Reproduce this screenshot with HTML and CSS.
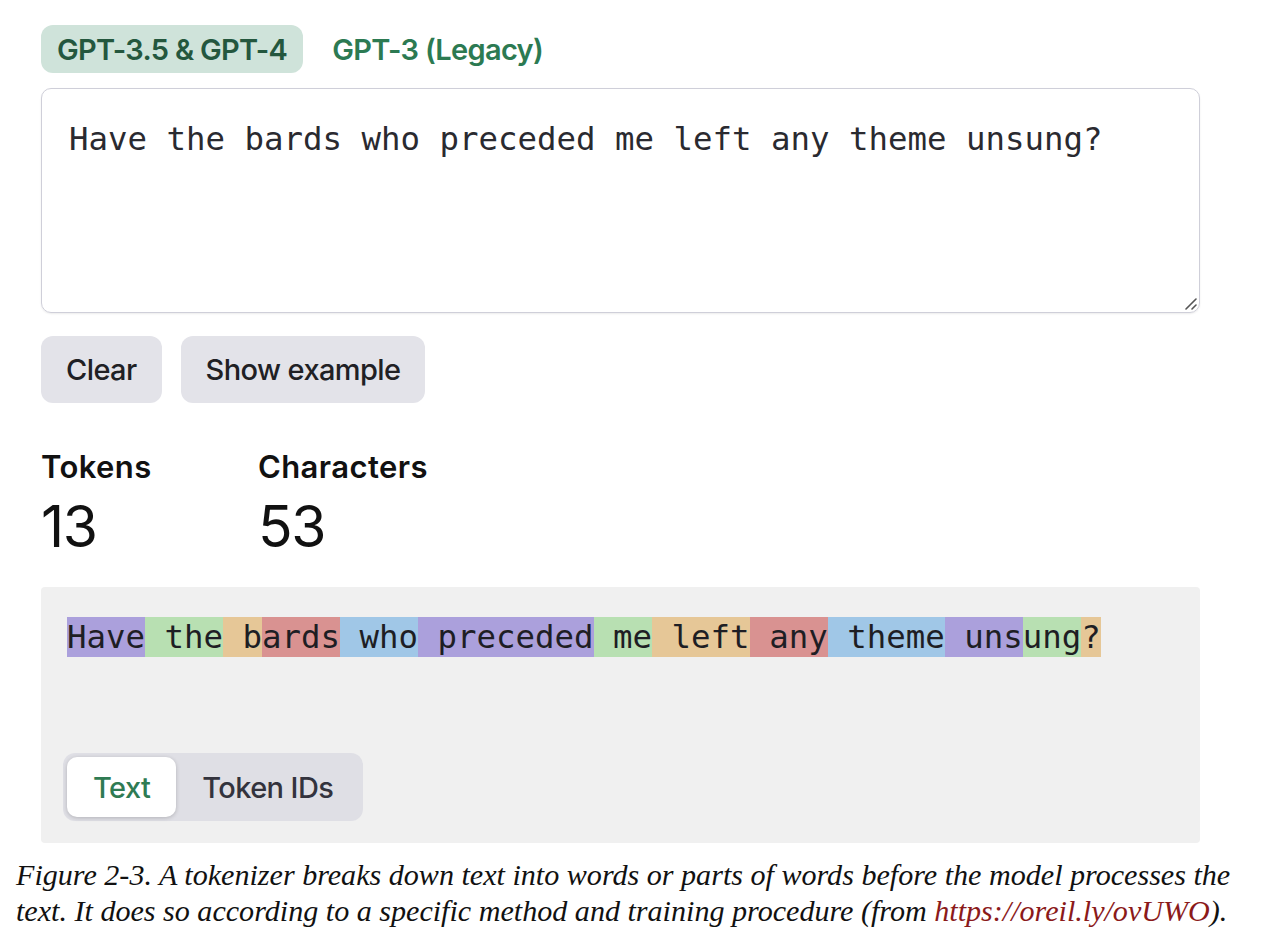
FILE: index.html
```html
<!DOCTYPE html>
<html>
<head>
<meta charset="utf-8">
<link rel="stylesheet" href="styles.css">
</head>
<body>
<div class="page">
  <div class="tabs">
    <span class="tab tab-active">GPT-3.5 &amp; GPT-4</span>
    <span class="tab">GPT-3 (Legacy)</span>
  </div>
  <div class="input-box">
    <div class="input-text">Have the bards who preceded me left any theme unsung?</div>
    <svg class="grip" width="14" height="14" viewBox="0 0 14 14"><path d="M3 13 L13 3 M9 13 L13 9" stroke="#555" stroke-width="1.6" stroke-linecap="round"/></svg>
  </div>
  <div class="actions">
    <button class="btn">Clear</button>
    <button class="btn">Show example</button>
  </div>
  <div class="stats">
    <div class="stat stat-tokens">
      <div class="stat-label">Tokens</div>
      <div class="stat-value">13</div>
    </div>
    <div class="stat">
      <div class="stat-label">Characters</div>
      <div class="stat-value">53</div>
    </div>
  </div>
  <div class="output">
    <div class="token-line"><span class="t t1">Have</span><span class="t t2"> the</span><span class="t t3"> b</span><span class="t t4">ards</span><span class="t t5"> who</span><span class="t t1"> preceded</span><span class="t t2"> me</span><span class="t t3"> left</span><span class="t t4"> any</span><span class="t t5"> theme</span><span class="t t1"> uns</span><span class="t t2">ung</span><span class="t t3">?</span></div>
    <div class="segmented">
      <span class="seg seg-active">Text</span>
      <span class="seg">Token IDs</span>
    </div>
  </div>
</div>
<p class="caption">Figure 2-3. A tokenizer breaks down text into words or parts of words before the model processes the text. It does so according to a specific method and training procedure (from <a class="link" href="#">https://oreil.ly/ovUWO</a>).</p>
</body>
</html>
```
FILE: styles.css
```css
html, body {
  margin: 0;
  padding: 0;
  background: #ffffff;
}
body {
  font-family: Inter, "Liberation Sans", sans-serif;
  color: #1a1a1a;
}
.page {
  width: 1159px;
  margin-left: 41px;
  padding-top: 25px;
}
.tabs {
  display: flex;
  gap: 13px;
  height: 48px;
}
.tab {
  display: flex;
  align-items: center;
  padding: 0 16px;
  border-radius: 12px;
  font-size: 29px;
  font-weight: 600;
  letter-spacing: -0.7px;
  color: #2c7a52;
}
.tab-active {
  background: #cfe3da;
  color: #24573e;
}
.input-box {
  position: relative;
  margin-top: 15px;
  height: 223px;
  border: 1px solid #cfcfd9;
  border-radius: 10px;
  box-shadow: 0 1px 2px rgba(0,0,0,0.08);
  padding: 0 27px;
}
.input-text {
  font-family: "DejaVu Sans Mono", "Liberation Mono", monospace;
  font-size: 32.4px;
  line-height: 40px;
  padding-top: 30px;
  color: #2a2a30;
  white-space: nowrap;
}
.grip {
  position: absolute;
  right: 2px;
  bottom: 2px;
}
.actions {
  display: flex;
  gap: 19px;
  margin-top: 23px;
}
.btn {
  height: 67px;
  padding: 0 25px;
  border: none;
  border-radius: 12px;
  background: #e3e3e9;
  font-family: Inter, "Liberation Sans", sans-serif;
  font-size: 29px;
  font-weight: 500;
  letter-spacing: -0.6px;
  color: #202024;
}
.stats {
  display: flex;
  margin-top: 46px;
}
.stat-tokens {
  width: 217px;
}
.stat-label {
  font-size: 31px;
  font-weight: 600;
  letter-spacing: 0.4px;
  line-height: 36px;
  color: #111;
}
.stat-value {
  margin-top: 10px;
  font-size: 57px;
  font-weight: 400;
  letter-spacing: -1.5px;
  line-height: 64px;
  color: #111;
}
.output {
  margin-top: 28px;
  height: 256px;
  box-sizing: border-box;
  background: #f0f0f0;
  border-radius: 4px;
  padding: 30px 22px 22px 26px;
  display: flex;
  flex-direction: column;
  justify-content: space-between;
  align-items: flex-start;
}
.token-line {
  font-family: "DejaVu Sans Mono", "Liberation Mono", monospace;
  font-size: 32.4px;
  line-height: 40px;
  white-space: pre;
  color: #1e1e24;
}
.t { display: inline-block; }
.t1 { background: #aba0dc; }
.t2 { background: #b8e0b2; }
.t3 { background: #e6c797; }
.t4 { background: #d99291; }
.t5 { background: #a0c7e7; }
.segmented {
  display: flex;
  margin-left: -4px;
  padding: 4px;
  background: #dfdfe5;
  border-radius: 12px;
  gap: 0;
}
.seg {
  display: flex;
  align-items: center;
  height: 60px;
  padding: 0 26px;
  border-radius: 10px;
  font-size: 29px;
  font-weight: 500;
  letter-spacing: -0.6px;
  color: #33333d;
}
.seg-active {
  background: #ffffff;
  color: #2f7b53;
  box-shadow: 0 1px 4px rgba(0,0,0,0.2);
}
.caption {
  margin: 14px 0 0 16px;
  width: 1245px;
  font-family: "Liberation Serif", serif;
  font-style: italic;
  font-size: 30.1px;
  line-height: 36px;
  color: #111;
}
.link {
  color: #8b1a1a;
  text-decoration: none;
}
```
